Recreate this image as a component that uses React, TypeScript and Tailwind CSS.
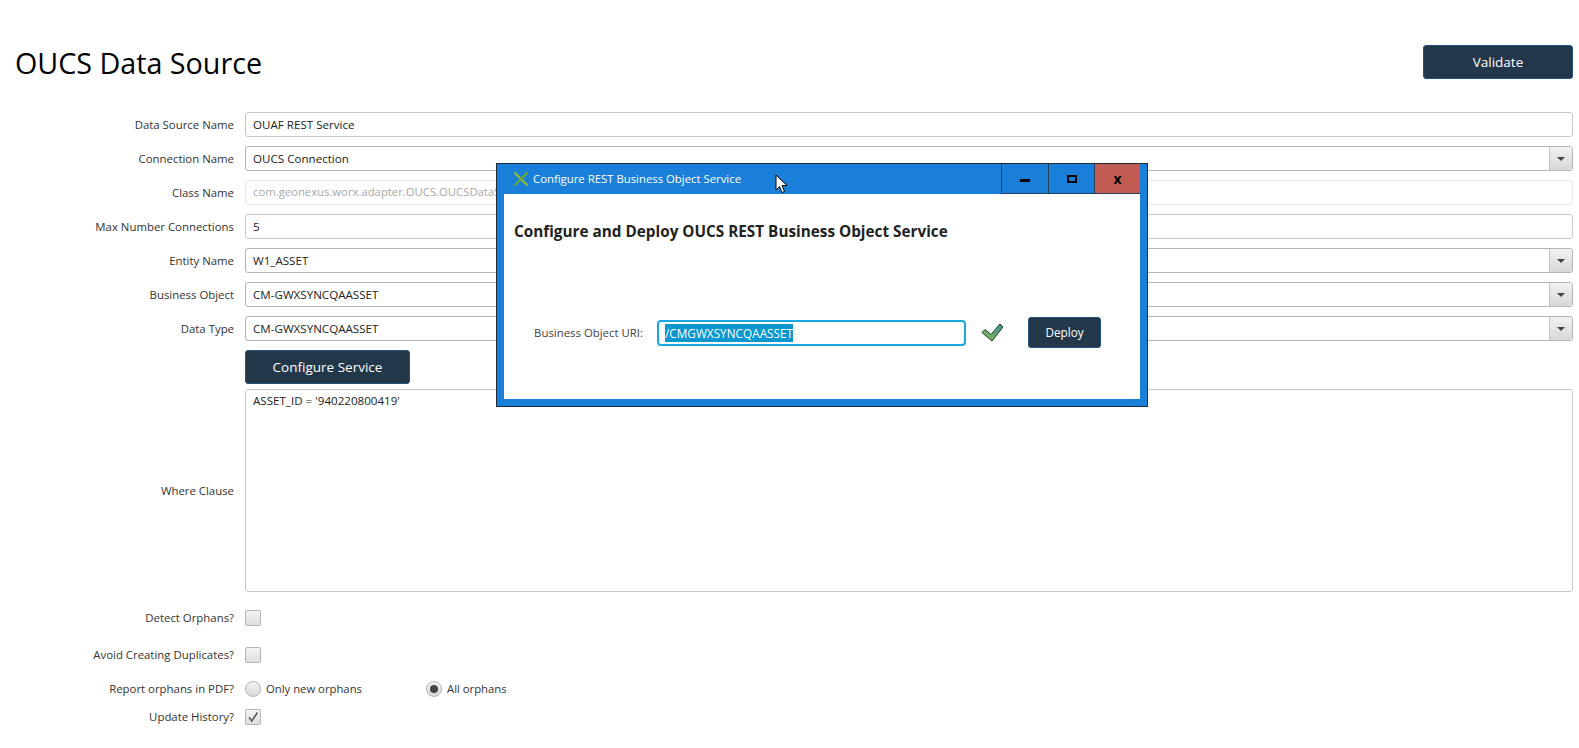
import { useState } from "react";

const FONT = "font-['Open_Sans','Liberation_Sans',sans-serif]";

function Label({ children }: { children: string }) {
  return <div className="w-[234px] shrink-0 text-right text-[11.4px] leading-none text-[#333]">{children}</div>;
}

function TextRow({ label, value, disabled }: { label: string; value: string; disabled?: boolean }) {
  return (
    <div className="flex h-[25px] items-center">
      <Label>{label}</Label>
      <div
        className={`ml-[11px] flex h-[25px] flex-1 items-center rounded-[3px] border bg-white pl-[7px] ${
          disabled ? "border-[#e6e6e6] text-[11.3px] text-[#a8a8a8]" : "border-[#c8c8c8] text-[11.6px] text-[#222]"
        }`}
      >
        {value}
      </div>
    </div>
  );
}

function SelectRow({ label, value }: { label: string; value: string }) {
  return (
    <div className="flex h-[25px] items-center">
      <Label>{label}</Label>
      <div className="ml-[11px] flex h-[25px] flex-1 items-center rounded-[3px] border border-[#b4b4b4] bg-white pl-[7px] text-[11.6px] text-[#222]">
        <span className="flex-1">{value}</span>
        <span className="flex h-full w-[23px] items-center justify-center rounded-r-[3px] border-l border-[#c4c4c4] bg-gradient-to-b from-[#f2f2f2] to-[#d8d8d8]">
          <span className="h-0 w-0 border-x-[4px] border-t-[4px] border-x-transparent border-t-[#444]" />
        </span>
      </div>
    </div>
  );
}

function CheckRow({ label, checked, className }: { label: string; checked?: boolean; className?: string }) {
  return (
    <div className={`flex h-[16px] items-center ${className ?? ""}`}>
      <Label>{label}</Label>
      <div className="ml-[11px] flex h-[16px] w-[16px] items-center justify-center rounded-[2px] border border-[#b5b5b5] bg-gradient-to-b from-[#f4f4f4] to-[#dedede]">
        {checked && (
          <svg width="12" height="12" viewBox="0 0 12 12" fill="none">
            <path d="M2 6.5 L4.8 10 L10.5 1.5" stroke="#555" strokeWidth="1.6" />
          </svg>
        )}
      </div>
    </div>
  );
}

function Radio({ label, checked, width }: { label: string; checked?: boolean; width: string }) {
  return (
    <div className={`flex items-center ${width}`}>
      <span className="flex h-[16px] w-[16px] items-center justify-center rounded-full border border-[#b5b5b5] bg-gradient-to-b from-[#f2f2f2] to-[#d9d9d9]">
        {checked && <span className="h-[8px] w-[8px] rounded-full bg-[#444]" />}
      </span>
      <span className="ml-[5px] text-[11.3px] text-[#333]">{label}</span>
    </div>
  );
}

export default function App() {
  const [uri] = useState("/CMGWXSYNCQAASSET");

  return (
    <div className={`relative h-[748px] w-[1579px] overflow-hidden bg-white ${FONT}`}>
      {/* Header */}
      <div className="flex items-center justify-between pl-[15px] pr-[6px] pt-[45px]">
        <h1 className="translate-y-[1px] text-[28.7px] leading-[34px] text-black">OUCS Data Source</h1>
        <button className="h-[34px] w-[150px] rounded-[3px] border border-[#24527a] bg-[#23374b] text-[13.5px] text-white">Validate</button>
      </div>

      {/* Form */}
      <div className="mt-[33px] flex flex-col pr-[6px]">
        <div className="flex flex-col gap-[9px]">
          <TextRow label="Data Source Name" value="OUAF REST Service" />
          <SelectRow label="Connection Name" value="OUCS Connection" />
          <TextRow label="Class Name" value="com.geonexus.worx.adapter.OUCS.OUCSDataSource" disabled />
          <TextRow label="Max Number Connections" value="5" />
          <SelectRow label="Entity Name" value="W1_ASSET" />
          <SelectRow label="Business Object" value="CM-GWXSYNCQAASSET" />
          <SelectRow label="Data Type" value="CM-GWXSYNCQAASSET" />
        </div>
        <div className="ml-[245px] mt-[9px]">
          <button className="h-[34px] w-[165px] rounded-[3px] border border-[#24527a] bg-[#23374b] text-[13.5px] text-white">Configure Service</button>
        </div>
        <div className="mt-[5px] flex h-[203px] items-center">
          <Label>Where Clause</Label>
          <div className="ml-[11px] h-full flex-1 rounded-[3px] border border-[#c8c8c8] bg-white pl-[7px] pt-[2px] text-[11.6px] text-[#222]">ASSET_ID = '940220800419'</div>
        </div>
        <CheckRow label="Detect Orphans?" className="mt-[18px]" />
        <CheckRow label="Avoid Creating Duplicates?" className="mt-[21px]" />
        <div className="mt-[18px] flex h-[16px] items-center">
          <Label>Report orphans in PDF?</Label>
          <div className="ml-[11px] flex">
            <Radio label="Only new orphans" width="w-[181px]" />
            <Radio label="All orphans" checked width="w-[120px]" />
          </div>
        </div>
        <CheckRow label="Update History?" checked className="mt-[12px]" />
      </div>

      {/* Dialog */}
      <div className="absolute left-[496px] top-[163px] flex h-[244px] w-[652px] flex-col border border-[#1c2a3a] bg-[#1a7fd8]">
        <div className="flex h-[30px] shrink-0 items-stretch">
          <div className="flex flex-1 items-center pl-[16px]">
            <svg width="16" height="16" viewBox="0 0 16 16" fill="none">
              <path d="M1.5 1.5 L14.5 14.5" stroke="#8dbb3a" strokeWidth="2.4" />
              <path d="M14.5 1.5 L1.5 14.5" stroke="#6fa83a" strokeWidth="2" />
            </svg>
            <span className="ml-[4px] text-[11.35px] text-white">Configure REST Business Object Service</span>
          </div>
          <div className="flex w-[47px] items-center justify-center border-b border-l border-[#24405c]">
            <span className="mt-[3px] h-[3px] w-[10px] bg-black" />
          </div>
          <div className="flex w-[46px] items-center justify-center border-b border-l border-[#24405c]">
            <span className="h-[8px] w-[10px] border-2 border-black" />
          </div>
          <div className="mr-[7px] flex w-[46px] items-center justify-center border-b border-l border-[#24405c] bg-[#c25b52] text-[14px] font-bold leading-none text-black">x</div>
        </div>
        <div className="mx-[7px] mb-[7px] flex flex-1 flex-col bg-white">
          <div className="pl-[10px] pt-[27px] text-[15.3px] font-bold leading-[20px] text-[#222]">Configure and Deploy OUCS REST Business Object Service</div>
          <div className="mt-[76px] flex items-center">
            <div className="w-[139px] text-right text-[11.4px] text-[#444]">Business Object URI:</div>
            <div className="ml-[14px] flex h-[26px] w-[309px] items-center rounded-[4px] border-2 border-[#19a9e0] bg-white pl-[6px] text-[11.8px] text-white">
              <span className="bg-[#0a96cf] leading-[18px]">{uri}</span>
            </div>
            <svg className="ml-[15px]" width="24" height="22" viewBox="0 0 24 22" fill="none">
              <defs>
                <linearGradient id="tick" x1="0" y1="1" x2="1" y2="0">
                  <stop offset="0" stopColor="#8cc152" />
                  <stop offset="1" stopColor="#3a8f8a" />
                </linearGradient>
              </defs>
              <path d="M1 10.5 L4 7.5 L10 12.5 L19 2 L22 5 L11 19 Z" fill="url(#tick)" stroke="#1f3a2a" strokeWidth="1" />
            </svg>
            <button className="ml-[23px] h-[31px] w-[73px] rounded-[3px] border border-[#24527a] bg-[#23374b] text-[11.7px] text-white">Deploy</button>
          </div>
        </div>
      </div>

      {/* Mouse cursor */}
      <svg className="absolute left-[775px] top-[174px]" width="14" height="20" viewBox="0 0 14 20">
        <path d="M1 1 L1 16 L4.5 12.5 L7 18.5 L9.5 17.5 L7 11.5 L12 11.5 Z" fill="white" stroke="black" strokeWidth="1" />
      </svg>
    </div>
  );
}
